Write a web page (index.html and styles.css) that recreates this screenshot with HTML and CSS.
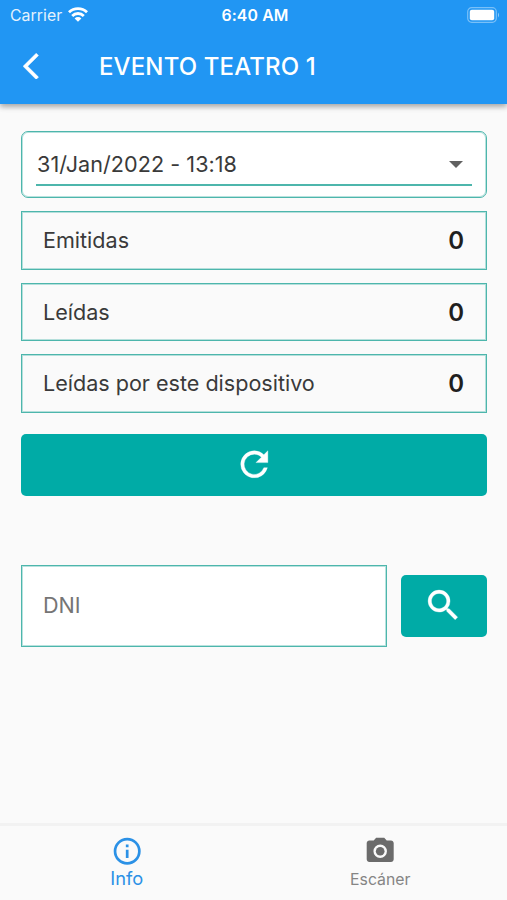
FILE: index.html
```html
<!DOCTYPE html>
<html lang="es">
<head>
<meta charset="utf-8">
<meta name="viewport" content="width=device-width, initial-scale=1">
<title>Evento Teatro 1</title>
<link rel="stylesheet" href="styles.css">
</head>
<body>
<div class="screen">
  <header class="header">
    <div class="status">
      <div class="carrier"><span class="carrier-name">Carrier</span>
        <svg class="wifi" viewBox="0 0 20 15"><g fill="none" stroke="#fff" stroke-width="2.8"><path d="M1 5.3a12.8 12.8 0 0 1 18 0"/><path d="M4.2 8.9a8.2 8.2 0 0 1 11.6 0"/></g><path fill="#fff" d="M6.6 11.4a4.8 4.8 0 0 1 6.8 0L10 14.8z"/></svg>
      </div>
      <span class="time">6:40 AM</span>
      <svg class="battery" viewBox="0 0 33 16"><rect x=".7" y=".7" width="28.6" height="14.6" rx="4" fill="none" stroke="#fff" stroke-opacity=".4" stroke-width="1.2"/><rect x="2.8" y="2.8" width="24.4" height="10.4" rx="2" fill="#fff"/><path d="M31 5.5q2 2.5 0 5z" fill="#fff" fill-opacity=".5"/></svg>
    </div>
    <div class="toolbar">
      <svg class="back" viewBox="0 2 12 20"><path fill="#fff" stroke="#fff" stroke-width=".3" d="M11.67 3.87 9.9 2.1 0 12l9.9 9.9 1.77-1.77L3.54 12z"/></svg>
      <h1 class="title">EVENTO TEATRO 1</h1>
    </div>
  </header>
  <main class="content">
    <div class="select">
      <div class="select-line"><span class="date">31/Jan/2022 - 13:18</span>
        <svg class="caret" viewBox="0 0 14 7"><path d="M0 0h14L7 7z" fill="#616161"/></svg>
      </div>
    </div>
    <div class="row"><span class="label">Emitidas</span><b class="count">0</b></div>
    <div class="row"><span class="label">Leídas</span><b class="count">0</b></div>
    <div class="row"><span class="label">Leídas por este dispositivo</span><b class="count">0</b></div>
    <button class="button refresh" aria-label="Actualizar"><svg class="icon" viewBox="0 0 24 24"><path fill="#fff" stroke="#fff" stroke-width=".2" d="M17.65 6.35A7.958 7.958 0 0 0 12 4a8 8 0 1 0 7.73 10h-2.08A6 6 0 1 1 12 6c1.66 0 3.14.69 4.22 1.78L13 11h7V4z"/></svg></button>
    <div class="search-row">
      <div class="field"><span class="placeholder">DNI</span></div>
      <button class="button search" aria-label="Buscar"><svg class="icon" viewBox="0 0 24 24"><path fill="#fff" stroke="#fff" stroke-width=".2" d="M15.5 14h-.79l-.28-.27A6.471 6.471 0 0 0 16 9.5 6.5 6.5 0 1 0 9.5 16c1.61 0 3.09-.59 4.23-1.57l.27.28v.79l5 4.99L20.49 19zm-6 0C7.01 14 5 11.99 5 9.5S7.01 5 9.5 5 14 7.01 14 9.5 11.99 14 9.5 14z"/></svg></button>
    </div>
  </main>
  <nav class="tabs">
    <div class="tab active"><svg class="tab-icon" viewBox="0 0 24 24"><path fill="currentColor" d="M11 7h2v2h-2zm0 4h2v6h-2zm1-9a10 10 0 1 0 0 20 10 10 0 0 0 0-20zm0 18a8 8 0 1 1 0-16 8 8 0 0 1 0 16z"/></svg><span class="tab-info">Info</span></div>
    <div class="tab"><svg class="tab-icon" viewBox="0 0 24 24"><circle cx="12" cy="12" r="3.2" fill="#6b6b6b"/><path fill="#6b6b6b" d="M9 2 7.17 4H4c-1.1 0-2 .9-2 2v12c0 1.1.9 2 2 2h16c1.1 0 2-.9 2-2V6c0-1.1-.9-2-2-2h-3.17L15 2zm3 15a5 5 0 1 1 0-10 5 5 0 0 1 0 10z"/></svg><span class="tab-scan">Escáner</span></div>
  </nav>
</div>
</body>
</html>
```
FILE: styles.css
```css
* { box-sizing: border-box; }
body { margin: 0; background: #fafafa; font-family: Inter, "Liberation Sans", sans-serif; color: #3a3a3a; }
svg { display: block; flex: none; }
.screen { height: 900px; display: flex; flex-direction: column; overflow: hidden; }
.header { height: 103.5px; background: #2196f3; color: #fff; box-shadow: 0 3px 5px rgba(0,0,0,.26), 0 1px 8px rgba(0,0,0,.12); }
.status { height: 29px; display: grid; grid-template-columns: 1fr auto 1fr; align-items: center; padding: 0 7px 0 10px; }
.carrier { display: flex; align-items: center; gap: 6px; }
.carrier-name, .time { font-size: 15.8px; line-height: 20px; padding-top: 2px; }
.carrier-name { letter-spacing: .06px; opacity: .88; }
.wifi { width: 20px; height: 15px; }
.time { font-weight: 600; letter-spacing: .15px; }
.battery { width: 33px; height: 16px; justify-self: end; }
.toolbar { height: 74px; display: flex; align-items: center; padding-left: 23px; }
.back { width: 16px; height: 26.6px; }
.title { margin: 0 0 0 60px; padding-top: 2px; font-size: 24px; font-weight: 550; line-height: 30px; letter-spacing: .13px; }
.content { flex: 1; padding: 27px 20px 0 21px; font-size: 21.6px; }
.select, .row, .field { border: 1px solid #4db6ac; box-shadow: inset 0 0 0 1px rgba(77,182,172,.4); }
.select { height: 67.5px; border-radius: 7px; background: #fff; padding: 11px 14px 0; }
.select-line { height: 43px; border-bottom: 2px solid #4db6ac; display: flex; justify-content: space-between; align-items: center; padding: 1px 9px 0 1px; }
.date { letter-spacing: .04px; padding-top: 1px; }
.caret { width: 14px; height: 7px; margin-top: 1px; }
.row { height: 58.5px; margin-top: 13px; display: flex; align-items: center; justify-content: space-between; padding: 0 22px 0 21px; }
.label { letter-spacing: -.02px; }
.count { font-size: 24px; font-weight: 600; color: #1f1f1f; padding-top: 1px; }
.button { display: flex; align-items: center; justify-content: center; border: 0; padding: 0; border-radius: 5px; background: #00aba6; height: 62px; }
.refresh { width: 100%; margin-top: 21px; }
.icon { width: 40.6px; height: 40.6px; }
.search-row { margin-top: 69px; display: flex; align-items: center; gap: 13.5px; }
.field { flex: 1; height: 82px; background: #fff; display: flex; align-items: center; padding: 0 0 2px 21px; color: #757575; }
.search { width: 86.5px; }
.tabs { height: 77px; border-top: 3px solid #f2f2f2; display: flex; }
.tab { flex: 1; display: flex; flex-direction: column; align-items: center; padding-top: 9px; color: #858585; }
.tab.active { color: #2b91e6; }
.tab-icon { width: 32.4px; height: 32.4px; }
.tab-info { font-size: 18.3px; line-height: 23px; }
.tab-scan { font-size: 15.8px; line-height: 26px; }
```
